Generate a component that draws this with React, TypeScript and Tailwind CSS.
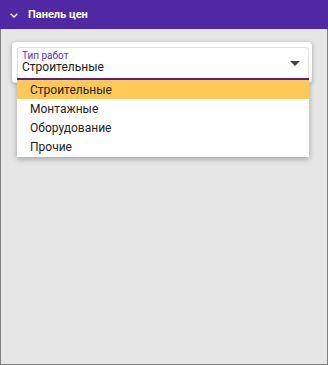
import React from "react";

export default function App() {
  const items = ["Строительные", "Монтажные", "Оборудование", "Прочие"];
  return (
    <div
      className="w-[328px] h-[365px] border border-[#808080] bg-[#e6e6e6] flex flex-col"
      style={{ fontFamily: "Roboto, 'Noto Sans', sans-serif" }}
    >
      <div className="h-[29px] -mx-px -mt-px bg-[#5128a4] flex items-center pl-[10px] gap-[10px] shrink-0">
        <svg width="8" height="5" viewBox="0 0 8 5" className="mt-px">
          <path d="M0.7 0.7 L4 4 L7.3 0.7" fill="none" stroke="#fff" strokeWidth="1.4" />
        </svg>
        <span className="text-white font-bold text-[11px] leading-none">Панель цен</span>
      </div>
      <div className="relative ml-[11px] mt-[13px] w-[300px] bg-white rounded-[4px] shadow-[0_1px_4px_rgba(0,0,0,0.3)] pl-[5px] pr-[3px] pt-[5px] pb-[3px]">
        <div className="relative h-[33px] border border-b-0 border-[#e0e0e0] rounded-t-[3px] pl-[4px] pt-[2px]">
          <div className="text-[10px] leading-[11px] text-[#5b2fc0]">Тип работ</div>
          <div className="text-[12px] leading-[12px] text-[#1a1a1a]">Строительные</div>
          <svg width="10" height="5" viewBox="0 0 10 5" className="absolute right-[8px] top-[13px]">
            <path d="M0 0 L10 0 L5 5 Z" fill="#444" />
          </svg>
          <div className="absolute left-[-1px] right-[-1px] bottom-0 h-[2px] bg-[#4b24a8]" />
        </div>
        <div className="absolute left-[5px] right-[3px] top-[38px] bg-white shadow-[0_2px_6px_rgba(0,0,0,0.3)] pb-px">
          {items.map((it, i) => (
            <div
              key={it}
              className={
                "h-[19px] flex items-center pl-[13px] text-[12px] text-[#222] " +
                (i === 0 ? "bg-[#ffc857]" : "")
              }
            >
              {it}
            </div>
          ))}
        </div>
      </div>
    </div>
  );
}
